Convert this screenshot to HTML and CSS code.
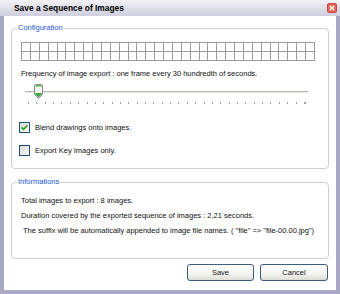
FILE: index.html
```html
<!DOCTYPE html>
<html>
<head>
<meta charset="utf-8">
<link rel="stylesheet" href="styles.css">
</head>
<body>
<div class="window">
  <div class="titlebar">
    <span class="title">Save a Sequence of Images</span>
    <span class="close"><svg width="10" height="10" viewBox="0 0 10 10"><rect x="0.5" y="0.5" width="9" height="9" rx="1.5" fill="#e26a5e" stroke="#c94a40"/><path d="M3 3 L7 7 M7 3 L3 7" stroke="#fff" stroke-width="1.3"/></svg></span>
  </div>
  <div class="body">
    <div class="group config">
      <span class="legend">Configuration</span>
      <div class="grid">
        <i></i><i></i><i></i><i></i><i></i><i></i><i></i><i></i><i></i><i></i><i></i><i></i><i></i><i></i><i></i><i></i><i></i><i></i><i></i><i></i><i></i><i></i><i></i><i></i><i></i><i></i><i></i><i></i><i></i><i></i><i></i><i></i><i></i>
        <i></i><i></i><i></i><i></i><i></i><i></i><i></i><i></i><i></i><i></i><i></i><i></i><i></i><i></i><i></i><i></i><i></i><i></i><i></i><i></i><i></i><i></i><i></i><i></i><i></i><i></i><i></i><i></i><i></i><i></i><i></i><i></i><i></i>
      </div>
      <div class="label freq">Frequency of image export : one frame every 30 hundredth of seconds.</div>
      <div class="slider">
        <div class="track"></div>
        <div class="thumb"><svg width="9" height="15" viewBox="0 0 9 15"><path d="M0.5 1.5 Q0.5 0.5 1.5 0.5 L7.5 0.5 Q8.5 0.5 8.5 1.5 L8.5 10.5 L4.5 14.5 L0.5 10.5 Z" fill="#f4f4f0" stroke="#8c8c8c"/><path d="M1.2 9 L7.8 9 L7.8 10.3 L4.5 13.6 L1.2 10.3 Z" fill="#3aa83a"/><rect x="1.2" y="1.2" width="6.6" height="1.3" fill="#3fb23f"/></svg></div>
        <div class="ticks">
          <b></b><b></b><b></b><b></b><b></b><b></b><b></b><b></b><b></b><b></b><b></b><b></b><b></b><b></b><b></b><b></b><b></b><b></b><b></b><b></b><b></b><b></b><b></b><b></b><b></b><b></b><b></b><b></b><b></b><b></b><b></b><b></b><b></b><b class="last"></b>
        </div>
      </div>
      <div class="check first">
        <span class="box"><svg width="7" height="7" viewBox="0 0 7 7"><path d="M0.6 3.4 L2.6 5.4 L6.4 1.2" fill="none" stroke="#21a121" stroke-width="1.6"/></svg></span>
        <span class="label">Blend drawings onto images.</span>
      </div>
      <div class="check second">
        <span class="box"></span>
        <span class="label">Export Key Images only.</span>
      </div>
    </div>
    <div class="group info">
      <span class="legend">Informations</span>
      <div class="label">Total images to export : 8 images.</div>
      <div class="label">Duration covered by the exported sequence of images : 2,21 seconds.</div>
      <div class="label suffix">The suffix will be automatically appended to image file names. ( "file" =&gt; "file-00.00.jpg")</div>
    </div>
    <div class="buttons">
      <span class="btn save">Save</span>
      <span class="btn cancel">Cancel</span>
    </div>
  </div>
</div>
</body>
</html>
```

FILE: styles.css
```css
html, body {
  margin: 0;
  padding: 0;
  background: #ffffff;
}
body {
  font-family: "Liberation Sans", Arial, sans-serif;
  font-size: 7.5px;
  color: #111;
}
.window {
  width: 340px;
  height: 294px;
  box-sizing: border-box;
  background: #a9a9c5;
  display: flex;
  flex-direction: column;
}
.titlebar {
  height: 16px;
  flex: none;
  display: flex;
  align-items: center;
  justify-content: space-between;
  padding: 0 3px 0 14px;
  background: linear-gradient(#f2f2f6, #dcdce6 60%, #cfcfdd);
  box-sizing: border-box;
}
.title {
  font-weight: bold;
  font-size: 8.4px;
  color: #000;
  line-height: 10px;
}
.close {
  display: flex;
  width: 10px;
  height: 10px;
  margin-top: -1px;
}
.body {
  flex: 1;
  margin: 0 4px 4px 4px;
  background: #fff;
  padding: 12px 7px 0 7px;
  display: flex;
  flex-direction: column;
}
.group {
  position: relative;
  border: 1px solid #d0d0c8;
  border-radius: 4px;
  padding: 0 9px;
}
.legend {
  position: absolute;
  top: -6px;
  left: 5px;
  padding: 0 1px;
  background: #fff;
  color: #1a55d8;
  line-height: 10px;
}
.label {
  line-height: 10px;
  white-space: nowrap;
}
.config {
  padding-top: 13px;
  padding-bottom: 12px;
}
.grid {
  width: 294px;
  display: grid;
  grid-template-columns: repeat(33, 1fr);
  grid-template-rows: 9px 9px;
  border-left: 1px solid #9c9c9c;
  border-top: 1px solid #9c9c9c;
  box-sizing: border-box;
}
.grid i {
  border-right: 1px solid #9c9c9c;
  border-bottom: 1px solid #9c9c9c;
}
.freq {
  margin-top: 8px;
}
.slider {
  position: relative;
  height: 24px;
  margin-top: 3px;
}
.track {
  position: absolute;
  left: 4px;
  top: 9px;
  width: 283px;
  height: 1px;
  background: #b8b8b0;
  border-bottom: 1px solid #e8e8e4;
}
.thumb {
  position: absolute;
  left: 13px;
  top: 2px;
  width: 9px;
  height: 15px;
}
.thumb svg { display: block; }
.ticks {
  position: absolute;
  left: 7px;
  top: 20px;
  width: 278px;
  height: 2px;
  display: flex;
  justify-content: space-between;
}
.ticks b {
  width: 1px;
  height: 2px;
  background: #a0a098;
}
.ticks b.last {
  width: 2px;
}
.check {
  display: flex;
  align-items: center;
  gap: 5px;
  height: 11px;
}
.check.first {
  margin-top: 16px;
}
.check.second {
  margin-top: 12px;
}
.box {
  width: 9px;
  height: 9px;
  border: 1px solid #1c5180;
  background: linear-gradient(135deg, #dcdcd6, #f8f8f6);
  display: flex;
  align-items: center;
  justify-content: center;
  margin-left: -2px;
}
.box svg { display: block; }
.info {
  margin-top: 13px;
  padding-top: 13px;
  padding-bottom: 22px;
  display: flex;
  flex-direction: column;
  gap: 5px;
}
.suffix {
  padding-left: 2px;
}
.buttons {
  display: flex;
  justify-content: flex-end;
  gap: 6px;
  margin-top: 5px;
  padding-right: 1px;
}
.btn {
  box-sizing: border-box;
  height: 17px;
  border: 1px solid #3c5a84;
  border-radius: 3px;
  background: linear-gradient(#ffffff, #f4f4f0 60%, #dcdcd4);
  display: flex;
  align-items: center;
  justify-content: center;
  line-height: 10px;
}
.save { width: 67px; }
.cancel { width: 68px; }
```
